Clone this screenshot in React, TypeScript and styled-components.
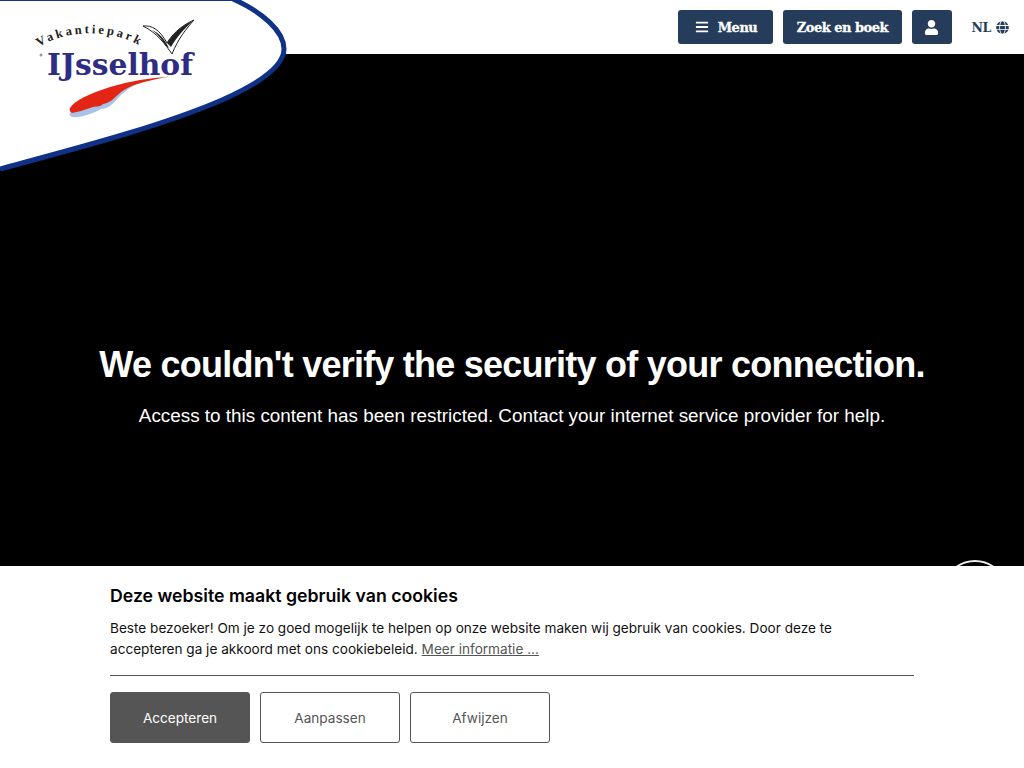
import React from 'react';
import styled, { createGlobalStyle } from 'styled-components';
import { FaBars, FaUser, FaGlobe } from 'react-icons/fa';

const GlobalStyle = createGlobalStyle`
  html, body {
    margin: 0;
    height: 100%;
    background: #000;
  }
  #root {
    height: 100%;
  }
`;

const Logo = () => (
  <LogoDrawing viewBox="0 0 290 176" width="290" height="176">
    <path
      d="M0 0 H233 C262 12 284 31 284 49 C284 67 258 84 222 100 C160 127 70 150 0 169 Z"
      fill="#fff"
    />
    <rect x="0" y="0" width="234" height="1" fill="#0f3187" />
    <path
      d="M233 -1 C262 12 284 31 284 49 C284 67 258 84 222 100 C160 127 70 150 0 169"
      fill="none"
      stroke="#0f3187"
      strokeWidth="5"
    />
    <path id="logo-arc" d="M39 47 C67 29 112 28 144 48" fill="none" />
    <LogoArcText>
      <textPath href="#logo-arc">Vakantiepark</textPath>
    </LogoArcText>
    <path
      d="M143 26 C152 25 160 30 167 43 C171 36 180 26 194 20 C186 29 178 39 172 54 C165 44 157 33 143 26 Z"
      fill="#fff"
      stroke="#222"
      strokeWidth="1"
    />
    <path d="M167 43 C172 35 182 25 193 21 C183 30 176 38 171 47 Z" fill="#222" />
    <path d="M152 30 C159 33 164 38 169 48 L166 46 C161 38 157 34 152 30 Z" fill="#222" />
    <circle cx="41" cy="55" r="1.5" fill="#999" />
    <LogoName x="47" y="75" textLength="146" lengthAdjust="spacingAndGlyphs">
      IJsselhof
    </LogoName>
    <path
      d="M70 113 C74 106 88 99 104 94 L135 85 C126 90 122 94 118 98 C113 104 108 109 101 109 C92 114 80 118 72 117 C70 116 69 115 70 113 Z"
      fill="#a9c3e8"
    />
    <path
      d="M70 108 C74 101 88 94 110 87 C130 81 150 78 170 76.5 C150 80 134 84 124 90 C116 95 112 103 103 104 C99 108 96 105 90 108 C84 110 78 112 72 113 C70 112 69 110 70 108 Z"
      fill="#e32515"
    />
  </LogoDrawing>
);

export default function App() {
  return (
    <Page>
      <GlobalStyle />
      <Header>
        <Logo />
        <NavButton>
          <FaBars size={14} />
          Menu
        </NavButton>
        <NavButton>Zoek en boek</NavButton>
        <IconButton>
          <FaUser size={15} />
        </IconButton>
        <Language>
          NL
          <FaGlobe size={13} />
        </Language>
      </Header>
      <Main>
        <Title>We couldn't verify the security of your connection.</Title>
        <Message>
          Access to this content has been restricted. Contact your internet
          service provider for help.
        </Message>
        <Badge />
      </Main>
      <CookieBar>
        <CookieTitle>Deze website maakt gebruik van cookies</CookieTitle>
        <CookieText>
          Beste bezoeker! Om je zo goed mogelijk te helpen op onze website maken
          wij gebruik van cookies. Door deze te accepteren ga je akkoord met ons
          cookiebeleid. <MoreLink href="#">Meer informatie ...</MoreLink>
        </CookieText>
        <Divider />
        <Actions>
          <CookieButton $primary>Accepteren</CookieButton>
          <CookieButton>Aanpassen</CookieButton>
          <CookieButton>Afwijzen</CookieButton>
        </Actions>
      </CookieBar>
    </Page>
  );
}

const Page = styled.div`
  height: 768px;
  display: flex;
  flex-direction: column;
  overflow: hidden;
  position: relative;
`;

const Header = styled.header`
  height: 54px;
  flex: none;
  background: #fff;
  display: flex;
  align-items: center;
  justify-content: flex-end;
  padding: 0 15px 0 0;
  box-sizing: border-box;
`;

const LogoDrawing = styled.svg`
  position: absolute;
  top: 0;
  left: 0;
  z-index: 2;
`;

const LogoArcText = styled.text`
  font-family: 'Liberation Serif', serif;
  font-weight: 700;
  font-size: 12.5px;
  letter-spacing: 2.8px;
  fill: #222;
`;

const LogoName = styled.text`
  font-family: 'DejaVu Serif', serif;
  font-weight: 700;
  font-size: 29px;
  fill: #2f2d83;
`;

const NavButton = styled.button`
  height: 34px;
  margin-right: 10px;
  padding: 0 13.5px;
  border: 0;
  border-radius: 3px;
  background: #253d5b;
  color: #fff;
  display: flex;
  align-items: center;
  gap: 9px;
  font-family: 'DejaVu Serif', serif;
  font-weight: 700;
  font-size: 13px;
  letter-spacing: -0.5px;
  -webkit-text-stroke: 0.3px #fff;

  &:first-of-type {
    padding: 0 16px 0 17px;
  }
`;

const IconButton = styled(NavButton)`
  width: 40px;
  padding: 0;
  justify-content: center;
  margin-right: 20px;
`;

const Language = styled.div`
  display: flex;
  align-items: center;
  gap: 5px;
  color: #253d5b;
  font-family: 'DejaVu Serif', serif;
  font-weight: 700;
  font-size: 12.5px;
  letter-spacing: -0.4px;
`;

const Main = styled.main`
  flex: 1;
  background: #000;
  color: #fff;
  display: flex;
  flex-direction: column;
  align-items: center;
  justify-content: center;
  position: relative;
  overflow: hidden;
  font-family: 'Liberation Sans', Arial, sans-serif;
  padding-top: 149px;
`;

const Title = styled.h1`
  margin: 0 0 20px;
  font-size: 36px;
  line-height: 41px;
  font-weight: 700;
  letter-spacing: -0.76px;
`;

const Message = styled.p`
  margin: 0;
  font-size: 18.86px;
  line-height: 21px;
`;

const Badge = styled.div`
  position: absolute;
  top: 506px;
  left: 942px;
  width: 66px;
  height: 66px;
  box-sizing: border-box;
  border: 2px solid #eee;
  border-radius: 50%;
`;

const CookieBar = styled.section`
  height: 202px;
  flex: none;
  box-sizing: border-box;
  background: #fff;
  padding: 19px 110px 0;
  font-family: Inter, 'Liberation Sans', sans-serif;
`;

const CookieTitle = styled.h2`
  margin: 0 0 11px;
  font-size: 17.7px;
  line-height: 22px;
  font-weight: 600;
  color: #000;
`;

const CookieText = styled.p`
  margin: 0;
  max-width: 770px;
  font-size: 13.6px;
  line-height: 21px;
  color: #111;
`;

const MoreLink = styled.a`
  color: #555;
  text-decoration: underline;
`;

const Divider = styled.hr`
  margin: 15px 0 16px;
  border: 0;
  border-top: 1px solid #555;
`;

const Actions = styled.div`
  display: flex;
  gap: 10px;
`;

const CookieButton = styled.button<{ $primary?: boolean }>`
  width: 140px;
  height: 51px;
  box-sizing: border-box;
  border: 1px solid #555;
  border-radius: 3px;
  background: ${(p) => (p.$primary ? '#555' : '#fff')};
  color: ${(p) => (p.$primary ? '#fff' : '#555')};
  font-family: Inter, 'Liberation Sans', sans-serif;
  font-size: 13.6px;
`;
